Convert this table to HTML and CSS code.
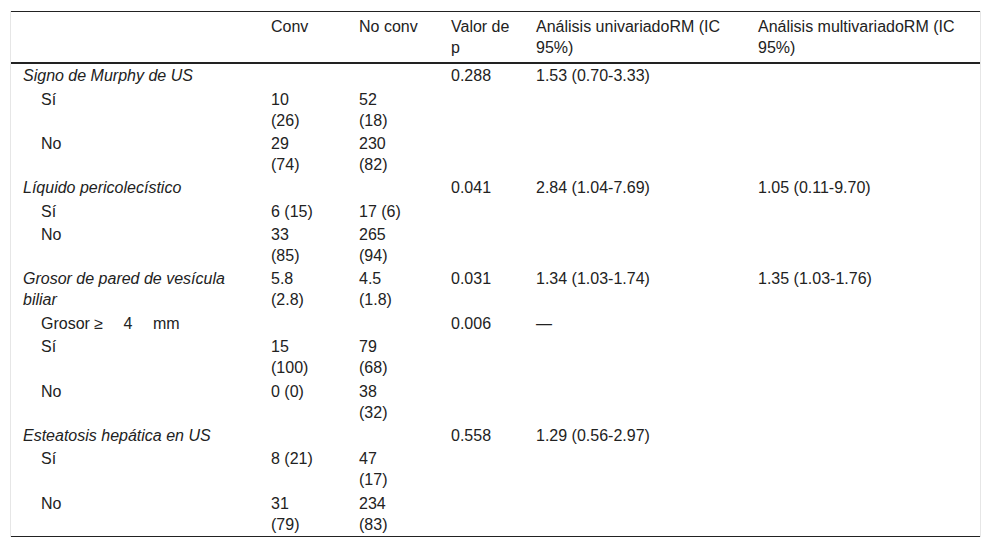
FILE: index.html
```html
<!DOCTYPE html>
<html lang="es">
<head>
<meta charset="utf-8">
<title>Tabla</title>
<link rel="stylesheet" href="styles.css">
</head>
<body>
<div class="wrap">
<table class="data">
<colgroup>
<col class="c1"><col class="c2"><col class="c3"><col class="c4"><col class="c5"><col class="c6">
</colgroup>
<thead>
<tr>
<th></th>
<th>Conv</th>
<th>No conv</th>
<th>Valor de p</th>
<th>Análisis univariadoRM (IC 95%)</th>
<th>Análisis multivariadoRM (IC 95%)</th>
</tr>
</thead>
<tbody>
<tr><td class="grp">Signo de Murphy de US</td><td></td><td></td><td>0.288</td><td>1.53 (0.70-3.33)</td><td></td></tr>
<tr><td class="sub">Sí</td><td>10 (26)</td><td>52 (18)</td><td></td><td></td><td></td></tr>
<tr><td class="sub">No</td><td>29 (74)</td><td>230 (82)</td><td></td><td></td><td></td></tr>
<tr><td class="grp">Líquido pericolecístico</td><td></td><td></td><td>0.041</td><td>2.84 (1.04-7.69)</td><td>1.05 (0.11-9.70)</td></tr>
<tr><td class="sub">Sí</td><td>6 (15)</td><td>17 (6)</td><td></td><td></td><td></td></tr>
<tr><td class="sub">No</td><td>33 (85)</td><td>265 (94)</td><td></td><td></td><td></td></tr>
<tr><td class="grp">Grosor de pared de vesícula biliar</td><td>5.8 (2.8)</td><td>4.5 (1.8)</td><td>0.031</td><td>1.34 (1.03-1.74)</td><td>1.35 (1.03-1.76)</td></tr>
<tr><td class="sub">Grosor ≥ &emsp;4&emsp; mm</td><td></td><td></td><td>0.006</td><td>—</td><td></td></tr>
<tr><td class="sub">Sí</td><td>15 (100)</td><td>79 (68)</td><td></td><td></td><td></td></tr>
<tr><td class="sub">No</td><td>0 (0)</td><td>38 (32)</td><td></td><td></td><td></td></tr>
<tr><td class="grp">Esteatosis hepática en US</td><td></td><td></td><td>0.558</td><td>1.29 (0.56-2.97)</td><td></td></tr>
<tr><td class="sub">Sí</td><td>8 (21)</td><td>47 (17)</td><td></td><td></td><td></td></tr>
<tr><td class="sub">No</td><td>31 (79)</td><td>234 (83)</td><td></td><td></td><td></td></tr>
</tbody>
</table>
</div>
</body>
</html>
```

FILE: styles.css
```css
html, body {
  margin: 0;
  padding: 0;
  background: #ffffff;
}
body {
  font-family: "Liberation Sans", Arial, sans-serif;
  font-size: 16px;
  line-height: 21px;
  color: #222222;
}
.wrap {
  margin: 11px 11px 0 10px;
  width: 971px;
  border-left: 1px solid #e6e6e6;
  border-right: 1px solid #e6e6e6;
  box-sizing: border-box;
}
.data {
  width: 100%;
  border-collapse: collapse;
  table-layout: fixed;
  border-top: 1px solid #222222;
  border-bottom: 1px solid #222222;
}
.c1 { width: 248px; }
.c2 { width: 88px; }
.c3 { width: 92px; }
.c4 { width: 85px; }
.c5 { width: 222px; }
.c6 { width: auto; }
.data th,
.data td {
  text-align: left;
  vertical-align: top;
  font-weight: normal;
  padding: 1.2px 8px 1.2px 12px;
}
.data thead th {
  padding-top: 4px;
  padding-bottom: 4px;
  border-bottom: 2px solid #222222;
}
.data td:nth-child(2),
.data td:nth-child(3) {
  padding-right: 30px;
}
.data td.grp {
  font-style: italic;
}
.data td.sub {
  padding-left: 30px;
}
```
